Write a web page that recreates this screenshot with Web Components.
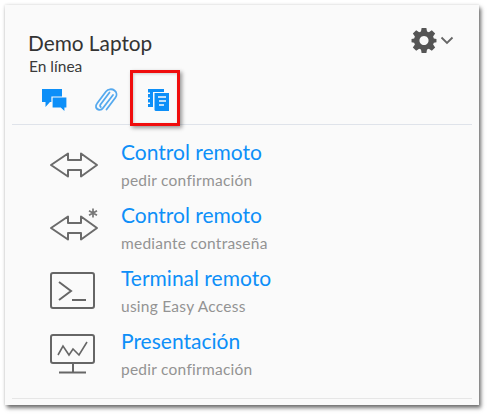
<!DOCTYPE html>
<html>
<head>
<meta charset="utf-8">
<title>Demo Laptop</title>
<style>
html, body { margin: 0; background: #fff; }
body { width: 488px; height: 414px; overflow: hidden; font-family: Lato, "Open Sans", sans-serif; }
</style>
</head>
<body>
<device-panel name="Demo Laptop" status="En línea">
  <action-row icon="arrows" title="Control remoto" sub="pedir confirmación"></action-row>
  <action-row icon="arrows-star" title="Control remoto" sub="mediante contraseña"></action-row>
  <action-row icon="terminal" title="Terminal remoto" sub="using Easy Access"></action-row>
  <action-row icon="screen" title="Presentación" sub="pedir confirmación"></action-row>
</device-panel>

<script>
const ARROWS = `<path d="M2 20 L19 8.500 V15 H32 V8.500 L48 20 L32 31.500 V25 H19 V31.500 Z" fill="none" stroke="#6b6b6b" stroke-width="2" stroke-linejoin="round"/>`;

const ICONS = {
  arrows: ARROWS,
  'arrows-star': ARROWS + `<path d="M44 0.500 V9.500 M40 2.700 L48 7.300 M48 2.700 L40 7.300" stroke="#777" stroke-width="1.700" fill="none"/>`,
  terminal: `<rect x="2" y="2" width="43" height="35" rx="2" fill="none" stroke="#666" stroke-width="2"/>
    <path d="M10 11 L22 20 L10 29" fill="none" stroke="#666" stroke-width="2"/><path d="M23 29 H37" stroke="#666" stroke-width="2"/>`,
  screen: `<path d="M4 1 H43 Q45 1 45 3 V27 Q45 29 43 29 H4 Q2 29 2 27 V3 Q2 1 4 1 Z" fill="none" stroke="#666" stroke-width="2"/>
    <path d="M9 21 L14 12 L20 21 L24 15 L30 21 L38 8" fill="none" stroke="#666" stroke-width="1.600"/>
    <path d="M24 29 V38 M10 38.500 H37" stroke="#666" stroke-width="2"/>`
};

const rowTemplate = document.createElement('template');
rowTemplate.innerHTML = `
  <style>
    :host { display: flex; height: 63px; }
    .icon { width: 109px; display: flex; justify-content: center; padding-left: 15px; box-sizing: border-box; }
    svg { width: 50px; height: 44px; margin-top: 7px; display: block; }
    .title { font-size: 21px; line-height: 26px; color: #0d8ff8; padding-top: 1px; }
    .sub { font-size: 15.500px; letter-spacing: .25px; line-height: 20px; color: #939393; margin-top: 5px; }
  </style>
  <div class="icon"><svg viewBox="0 0 50 44"></svg></div>
  <div>
    <div class="title"></div>
    <div class="sub"></div>
  </div>`;

class ActionRow extends HTMLElement {
  constructor() {
    super();
    this.attachShadow({ mode: 'open' });
    this.shadowRoot.appendChild(rowTemplate.content.cloneNode(true));
    this.shadowRoot.querySelector('svg').innerHTML = ICONS[this.getAttribute('icon')];
    this.shadowRoot.querySelector('.title').textContent = this.getAttribute('title');
    this.shadowRoot.querySelector('.sub').textContent = this.getAttribute('sub');
  }
}

const panelTemplate = document.createElement('template');
panelTemplate.innerHTML = `
  <style>
    :host {
      display: block; box-sizing: border-box; width: 474px; height: 400px; margin: 5px 0 0 5px;
      background: #fafafa; color: #333; padding: 0 7px;
      box-shadow: 2px 3px 4px rgba(0,0,0,.55), 0 0 3px rgba(0,0,0,.15);
    }
    header { height: 119px; border-bottom: 1px solid #dfe3ea; position: relative; }
    .name { font-size: 20.800px; line-height: 26px; padding: 25px 0 0 16px; color: #333; }
    .status { font-size: 15.500px; line-height: 18px; padding-left: 17px; color: #3a3a3a; margin-top: 1px; }
    .tabs { display: flex; padding-left: 29px; margin-top: 12px; }
    .tabs svg { display: block; width: 26px; height: 26px; margin-right: 26px; }
    .gear { position: absolute; right: 18px; top: 22px; display: flex; align-items: center; gap: 3px; }
    .mark {
      position: absolute; left: 118px; top: 65px; width: 44px; height: 50px;
      border: 3px solid #f00d0d; box-shadow: 2px 2px 4px rgba(0,0,0,.4), inset 1px 1px 3px rgba(0,0,0,.18);
    }
    .rows { box-sizing: border-box; padding-top: 13px; height: 274px; border-bottom: 1px solid #e6e6e6; }
  </style>
  <header>
    <div class="name"></div>
    <div class="status"></div>
    <div class="tabs">
      <svg viewBox="0 0 26 26"><path fill="#0d8ff8" d="M1 2 H21 V15 H9 L4.500 20 V15 H1 Z"/><path fill="#0d8ff8" stroke="#fafafa" stroke-width="1.200" d="M11 10 H26 V21 H24 V25.500 L19.500 21 H11 Z"/></svg>
      <svg viewBox="0 0 26 26"><path fill="none" stroke="#55a9ee" stroke-width="1.800" stroke-linecap="round" d="M20 8 L10 21 C8 24 3.500 23 3 20 C2.700 18.500 3.200 17.500 4 16.500 L13 4.500 C15 2 19 1.500 21.500 3.500 C24 5.500 24 8.500 22.500 10.500 L13.500 22.500 M16.500 5.500 L7.500 17.500 C6.800 18.500 7 19.500 7.800 20"/></svg>
      <svg viewBox="0 0 26 26"><path fill="#0d8ff8" d="M3 2 H19 V5 H8 V20 H3 V17 H5 V15.500 H3 V12 H5 V10.500 H3 V7 H5 V5.500 H3 Z"/><path fill="#0d8ff8" d="M9.500 6 H24 V24 H11 Q9.500 24 9.500 22.500 Z"/><path stroke="#fafafa" stroke-width="1.500" d="M13 10 H21 M14 14 H21 M14 18 H19"/></svg>
    </div>
    <div class="gear">
      <svg width="26" height="26" viewBox="0 0 24 24"><path fill="#555" fill-rule="evenodd" d="M9.800 1 H14.200 L14.800 4.200 L16.500 4.900 L19.200 3 L22.300 6.100 L20.400 8.800 L21.100 10.500 L23.500 11 V14 L21.100 14.500 L20.400 16.200 L22.300 18.900 L19.200 22 L16.500 20.100 L14.800 20.800 L14.200 24 H9.800 L9.200 20.800 L7.500 20.100 L4.800 22 L1.700 18.900 L3.600 16.200 L2.900 14.500 L0.500 14 V11 L2.900 10.500 L3.600 8.800 L1.700 6.100 L4.800 3 L7.500 4.900 L9.200 4.200 Z M12 8.300 A4.200 4.200 0 1 0 12.001 8.300 Z"/></svg>
      <svg width="14" height="9" viewBox="0 0 14 9"><path d="M1.500 1.500 L7 7 L12.500 1.500" fill="none" stroke="#666" stroke-width="1.800"/></svg>
    </div>
    <div class="mark"></div>
  </header>
  <div class="rows"><slot></slot></div>`;

class DevicePanel extends HTMLElement {
  constructor() {
    super();
    this.attachShadow({ mode: 'open' });
    this.shadowRoot.appendChild(panelTemplate.content.cloneNode(true));
    this.shadowRoot.querySelector('.name').textContent = this.getAttribute('name');
    this.shadowRoot.querySelector('.status').textContent = this.getAttribute('status');
  }
}

window.customElements.define('action-row', ActionRow);
window.customElements.define('device-panel', DevicePanel);
</script>
</body>
</html>
